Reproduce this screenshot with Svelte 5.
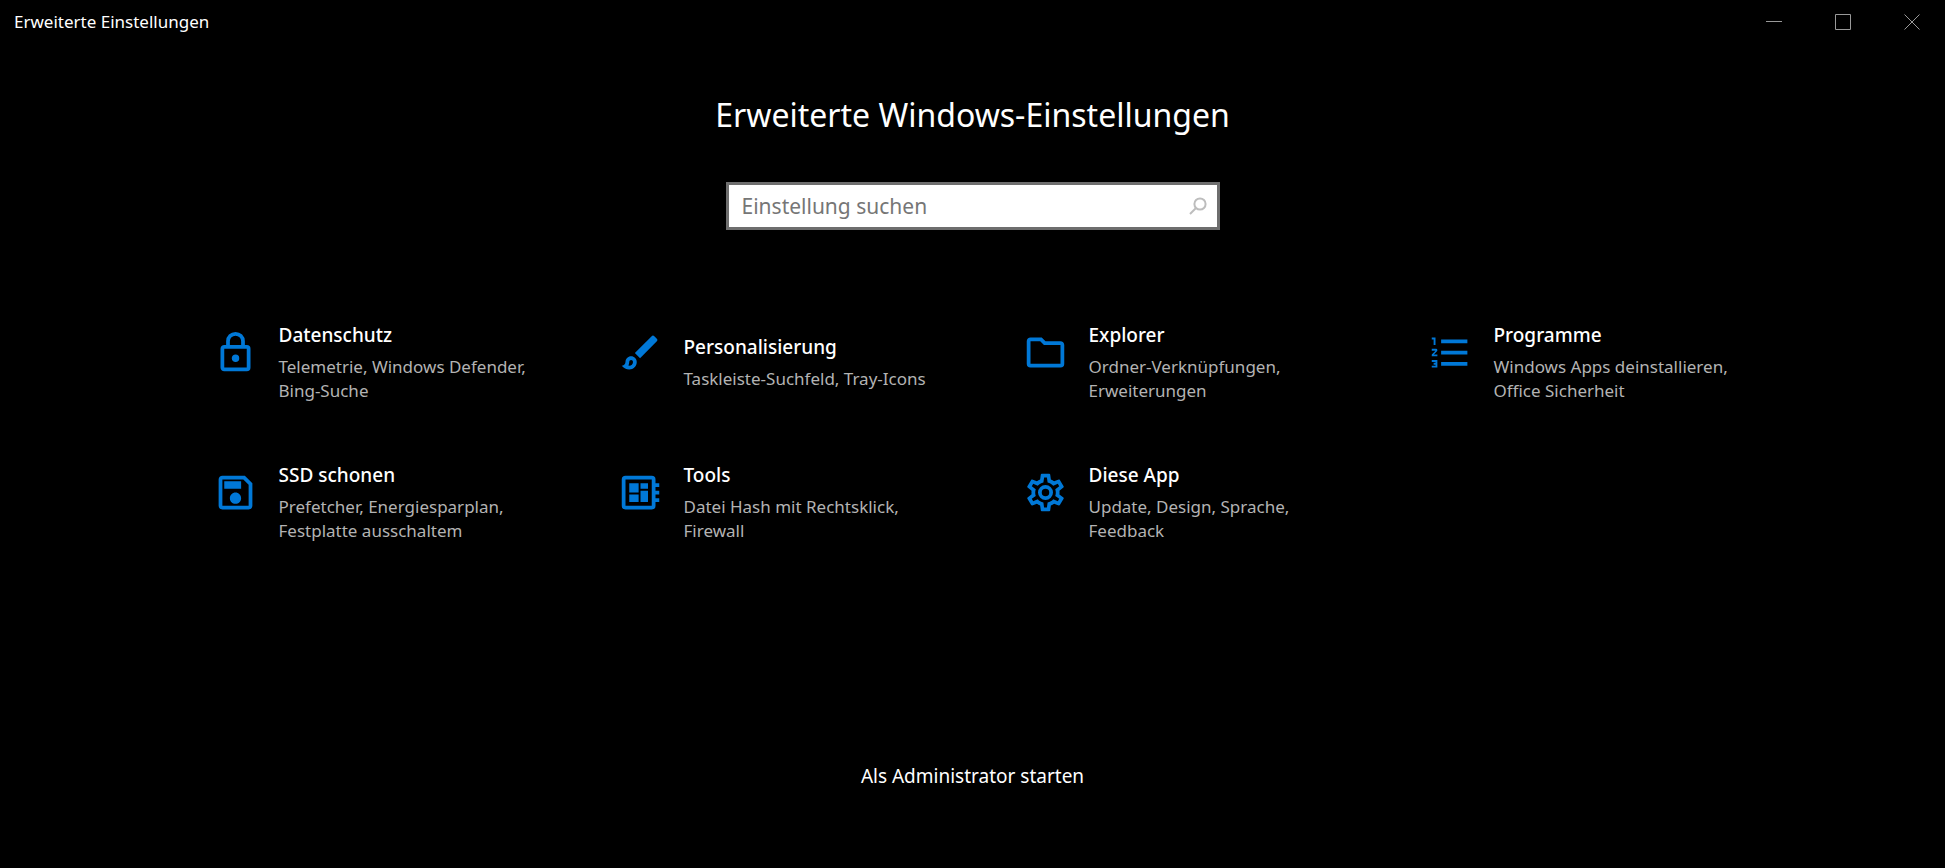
<script>
  let query = $state('');

  const tiles = [
    {
      title: 'Datenschutz',
      text: 'Telemetrie, Windows Defender, Bing-Suche',
      icon: 'M12,17C10.89,17 10,16.1 10,15C10,13.89 10.89,13 12,13A2,2 0 0,1 14,15A2,2 0 0,1 12,17M18,20V10H6V20H18M18,8A2,2 0 0,1 20,10V20A2,2 0 0,1 18,22H6C4.89,22 4,21.1 4,20V10C4,8.89 4.89,8 6,8H7V6A5,5 0 0,1 12,1A5,5 0 0,1 17,6V8H18M12,3A3,3 0 0,0 9,6V8H15V6A3,3 0 0,0 12,3Z'
    },
    {
      title: 'Personalisierung',
      text: 'Taskleiste-Suchfeld, Tray-Icons',
      icon: 'M7 16c.55 0 1 .45 1 1 0 1.1-.9 2-2 2-.17 0-.33-.02-.5-.05.31-.55.5-1.21.5-1.95 0-.55.45-1 1-1M7 14c-1.66 0-3 1.34-3 3 0 1.31-1.16 2-2 2 .92 1.22 2.49 2 4 2 2.21 0 4-1.79 4-4 0-1.66-1.34-3-3-3zM20.71 4.63l-1.34-1.34c-.39-.39-1.02-.39-1.41 0L9 12.25 11.75 15l8.96-8.96c.39-.39.39-1.02 0-1.41z'
    },
    {
      title: 'Explorer',
      text: 'Ordner-Verknüpfungen, Erweiterungen',
      icon: 'M20,6H12L10,4H4C2.89,4 2,4.89 2,6V18A2,2 0 0,0 4,20H20A2,2 0 0,0 22,18V8C22,6.89 21.1,6 20,6ZM20,18H4V6H9.17L11.17,8H20V18Z'
    },
    {
      title: 'Programme',
      text: 'Windows Apps deinstallieren, Office Sicherheit',
      icon: 'M7,13V11H21V13H7M7,19V17H21V19H7M7,7V5H21V7H7M3,8V5H2V4H4V8H3M2,17V16H5V20H2V19H4V18.5H3V17.5H4V17H2M4.25,10A0.75,0.75 0 0,1 5,10.75C5,10.95 4.92,11.14 4.79,11.27L3.12,13H5V14H2V13.08L4,11H2V10H4.25Z'
    },
    {
      title: 'SSD schonen',
      text: 'Prefetcher, Energiesparplan, Festplatte ausschaltem',
      icon: 'M17 3H5C3.89 3 3 3.9 3 5V19C3 20.1 3.89 21 5 21H19C20.1 21 21 20.1 21 19V7L17 3M19 19H5V5H16.17L19 7.83V19M12 12C10.34 12 9 13.34 9 15S10.34 18 12 18 15 16.66 15 15 13.66 12 12 12M6 6H15V10H6V6Z'
    },
    {
      title: 'Tools',
      text: 'Datei Hash mit Rechtsklick, Firewall',
      icon: 'M22,9V7H20V5A2,2 0 0,0 18,3H4A2,2 0 0,0 2,5V19A2,2 0 0,0 4,21H18A2,2 0 0,0 20,19V17H22V15H20V13H22V11H20V9H22M18,19H4V5H18V19M6,13H11V17H6V13M12,7H16V10H12V7M6,7H11V12H6V7M12,11H16V17H12V11Z'
    },
    {
      title: 'Diese App',
      text: 'Update, Design, Sprache, Feedback',
      icon: 'M12,8A4,4 0 0,1 16,12A4,4 0 0,1 12,16A4,4 0 0,1 8,12A4,4 0 0,1 12,8M12,10A2,2 0 0,0 10,12A2,2 0 0,0 12,14A2,2 0 0,0 14,12A2,2 0 0,0 12,10M10,22C9.75,22 9.54,21.82 9.5,21.58L9.13,18.93C8.5,18.68 7.96,18.34 7.44,17.94L4.95,18.95C4.73,19.03 4.46,18.95 4.34,18.73L2.34,15.27C2.21,15.05 2.27,14.78 2.46,14.63L4.57,12.97L4.5,12L4.57,11L2.46,9.37C2.27,9.22 2.21,8.95 2.34,8.73L4.34,5.27C4.46,5.05 4.73,4.96 4.95,5.05L7.44,6.05C7.96,5.66 8.5,5.32 9.13,5.07L9.5,2.42C9.54,2.18 9.75,2 10,2H14C14.25,2 14.46,2.18 14.5,2.42L14.87,5.07C15.5,5.32 16.04,5.66 16.56,6.05L19.05,5.05C19.27,4.96 19.54,5.05 19.66,5.27L21.66,8.73C21.79,8.95 21.73,9.22 21.54,9.37L19.43,11L19.5,12L19.43,13L21.54,14.63C21.73,14.78 21.79,15.05 21.66,15.27L19.66,18.73C19.54,18.95 19.27,19.04 19.05,18.95L16.56,17.95C16.04,18.34 15.5,18.68 14.87,18.93L14.5,21.58C14.46,21.82 14.25,22 14,22H10M11.25,4L10.88,6.61C9.68,6.86 8.62,7.5 7.85,8.39L5.44,7.35L4.69,8.65L6.8,10.2C6.4,11.37 6.4,12.64 6.8,13.8L4.68,15.36L5.43,16.66L7.86,15.62C8.63,16.5 9.68,17.14 10.87,17.38L11.24,20H12.76L13.13,17.39C14.32,17.14 15.37,16.5 16.14,15.62L18.57,16.66L19.32,15.36L17.2,13.81C17.6,12.64 17.6,11.37 17.2,10.2L19.31,8.65L18.56,7.35L16.15,8.39C15.38,7.5 14.32,6.86 13.12,6.62L12.75,4H11.25Z'
    }
  ];
</script>

<div class="window">
  <header class="titlebar">
    <span class="caption">Erweiterte Einstellungen</span>
    <div class="controls">
      <button type="button" aria-label="Minimieren">
        <svg viewBox="0 0 16 16"><path d="M0 7.5H16" /></svg>
      </button>
      <button type="button" aria-label="Maximieren">
        <svg viewBox="0 0 16 16"><path d="M.5 .5H15.5V15.5H.5Z" /></svg>
      </button>
      <button type="button" aria-label="Schließen">
        <svg viewBox="0 0 16 16"><path d="M.5 .5L15.5 15.5M15.5 .5L.5 15.5" /></svg>
      </button>
    </div>
  </header>

  <main>
    <h1>Erweiterte Windows-Einstellungen</h1>

    <form class="search" role="search" onsubmit={(e) => e.preventDefault()}>
      <input type="text" aria-label="Einstellung suchen" placeholder="Einstellung suchen" bind:value={query} />
      <button type="submit" aria-label="Suchen">
        <svg viewBox="0 0 18 18"><circle cx="11" cy="7" r="5.6" /><path d="M7 11L1 17" /></svg>
      </button>
    </form>

    <nav class="grid">
      {#each tiles as tile}
        <button type="button" class="tile">
          <svg class="icon" viewBox="0 0 24 24"><path fill-rule="evenodd" d={tile.icon} /></svg>
          <span class="label">
            <span class="title">{tile.title}</span>
            <span class="text">{tile.text}</span>
          </span>
        </button>
      {/each}
    </nav>
  </main>

  <footer>
    <button type="button" class="admin">Als Administrator starten</button>
  </footer>
</div>

<style>
  :global(body) {
    background: #000;
  }

  .window {
    display: flex;
    flex-direction: column;
    min-height: 100vh;
    color: #fff;
    background: #000;
    font-family: 'Segoe UI', 'Noto Sans', 'Open Sans', sans-serif;
  }

  button {
    padding: 0;
    border: 0;
    color: inherit;
    background: none;
    font: inherit;
    text-align: left;
  }

  .titlebar {
    display: flex;
    justify-content: space-between;
    align-items: center;
    height: 44px;
    padding-left: 14px;
  }

  .caption {
    font-size: 17px;
    line-height: 24px;
  }

  .controls {
    display: flex;
    align-self: stretch;
    gap: 2px;
  }

  .controls button {
    display: grid;
    place-items: center;
    width: 66px;
  }

  .controls svg {
    width: 16px;
    height: 16px;
    fill: none;
    stroke: #999;
  }

  .controls button + button {
    width: 67px;
  }

  main {
    display: flex;
    flex-direction: column;
    align-items: center;
    flex: 1;
    padding-top: 47px;
  }

  h1 {
    margin: 0;
    font-size: 32px;
    font-weight: 400;
    line-height: 48px;
  }

  .search {
    display: flex;
    box-sizing: border-box;
    width: 494px;
    max-width: 100%;
    height: 48px;
    margin-top: 43px;
    border: 3px solid #6e6e6e;
    background: #fff;
  }

  .search input {
    flex: 1;
    min-width: 0;
    padding: 0 0 0 13px;
    border: 0;
    outline: 0;
    color: #000;
    background: transparent;
    font: inherit;
    font-size: 21px;
  }

  .search input::placeholder {
    color: #767676;
    opacity: 1;
  }

  .search button {
    display: grid;
    place-items: center;
    width: 38px;
  }

  .search svg {
    width: 18px;
    height: 18px;
    fill: none;
    stroke: #bdbdbd;
    stroke-width: 2;
  }

  .grid {
    display: grid;
    grid-template-columns: repeat(auto-fill, 405px);
    justify-content: center;
    box-sizing: border-box;
    width: 100%;
    max-width: 1620px;
    margin-top: 62px;
  }

  .tile {
    display: flex;
    align-items: center;
    gap: 21px;
    height: 140px;
    padding-left: 50px;
  }

  .icon {
    flex: none;
    width: 45px;
    height: 45px;
    margin-bottom: 20px;
    fill: #0078d7;
  }

  .label {
    display: flex;
    flex-direction: column;
    gap: 6px;
    width: 260px;
  }

  .title {
    font-size: 19px;
    font-weight: 500;
    line-height: 28px;
  }

  .text {
    color: #b3b3b3;
    font-size: 17px;
    line-height: 24px;
  }

  footer {
    display: flex;
    justify-content: center;
    padding-bottom: 78px;
  }

  .admin {
    font-size: 19px;
    line-height: 28px;
  }
</style>
